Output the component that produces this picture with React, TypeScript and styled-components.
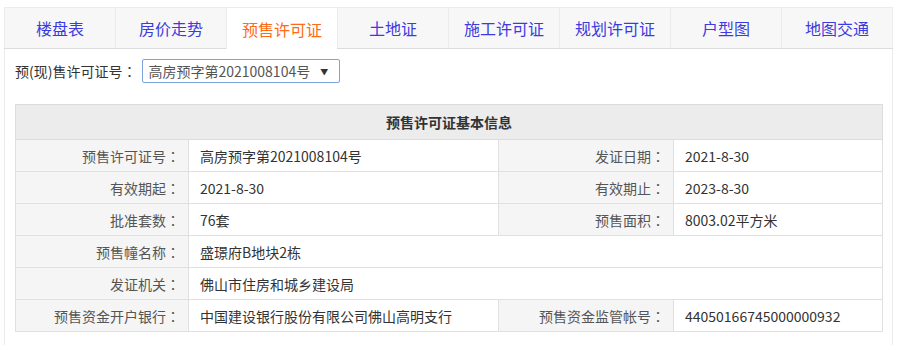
import React from 'react'
import styled, { createGlobalStyle } from 'styled-components'

const FONT = `"Microsoft YaHei", "Noto Sans CJK SC", "Noto Sans", sans-serif`

const GlobalStyle = createGlobalStyle`
  html, body {
    margin: 0;
    padding: 0;
    background: #fff;
    font-family: ${FONT};
  }
`

const TABS = ['楼盘表', '房价走势', '预售许可证', '土地证', '施工许可证', '规划许可证', '户型图', '地图交通']
const ACTIVE_TAB = 2

type Field = { label: string; value: string }
type Row = [Field] | [Field, Field]

const ROWS: Row[] = [
  [
    { label: '预售许可证号', value: '高房预字第2021008104号' },
    { label: '发证日期', value: '2021-8-30' },
  ],
  [
    { label: '有效期起', value: '2021-8-30' },
    { label: '有效期止', value: '2023-8-30' },
  ],
  [
    { label: '批准套数', value: '76套' },
    { label: '预售面积', value: '8003.02平方米' },
  ],
  [{ label: '预售幢名称', value: '盛璟府B地块2栋' }],
  [{ label: '发证机关', value: '佛山市住房和城乡建设局' }],
  [
    { label: '预售资金开户银行', value: '中国建设银行股份有限公司佛山高明支行' },
    { label: '预售资金监管帐号', value: '44050166745000000932' },
  ],
]

const Page = styled.div`
  padding: 7px 7px 0 4px;
`

const Panel = styled.div`
  width: 889px;
  border-left: 1px solid #ebebeb;
  border-right: 1px solid #ebebeb;
  box-sizing: border-box;
  height: 338px;
`

const TabBar = styled.ul`
  display: flex;
  margin: 0 -1px;
  padding: 0;
  list-style: none;
  border-top: 1px solid #ececec;
  border-bottom: 1px solid #dcdcdc;
  background: #f7f7f7;
  height: 40px;
`

const Tab = styled.li<{ $active?: boolean }>`
  flex: 1;
  display: flex;
  align-items: center;
  justify-content: center;
  font-size: 16px;
  color: ${(p) => (p.$active ? '#ff6a13' : '#3b3bdf')};
  background: ${(p) => (p.$active ? '#fff' : 'transparent')};
  border-left: 1px solid #ebebeb;
  margin-bottom: ${(p) => (p.$active ? '-1px' : '0')};
  cursor: pointer;
  &:last-child {
    border-right: 1px solid #ececec;
  }
`

const Body = styled.div`
  padding: 10px 10px 0 10px;
`

const PickerRow = styled.div`
  display: flex;
  align-items: center;
  gap: 6px;
  height: 24px;
  font-size: 14px;
  color: #333;
`

// centred full-width colon, as the original page's font draws it
const Colon = styled.span`
  font-family: "Noto Sans CJK TC", "Noto Sans CJK SC", sans-serif;
`

const Picker = styled.div`
  display: flex;
  align-items: center;
  gap: 10px;
  width: 198px;
  height: 24px;
  box-sizing: border-box;
  padding: 0 0 0 5px;
  border: 1px solid #7ba3dd;
  border-radius: 2px;
  font-size: 14px;
  color: #555;
  background: #fff;
`

const Caret = styled.span`
  font-size: 8px;
  color: #333;
`

const InfoTable = styled.table`
  margin-top: 21px;
  width: 867px;
  border-collapse: collapse;
  table-layout: fixed;
  font-size: 14px;
  border: 1px solid #dcdcdc;
`

const HeadCell = styled.th`
  height: 34px;
  padding: 0;
  background: #ececec;
  color: #333;
  font-weight: bold;
  text-align: center;
  border: 1px solid #dcdcdc;
`

const LabelCell = styled.td`
  height: 31px;
  padding: 0 8px 0 0;
  background: #f5f5f5;
  color: #555;
  text-align: right;
  border: 1px solid #e0e0e0;
  white-space: nowrap;
`

const ValueCell = styled.td`
  height: 31px;
  padding: 0 0 0 11px;
  background: #fff;
  color: #333;
  text-align: left;
  border: 1px solid #e0e0e0;
  white-space: nowrap;
`

export default function App() {
  return (
    <Page>
      <GlobalStyle />
      <Panel>
        <TabBar>
          {TABS.map((t, i) => (
            <Tab key={t} $active={i === ACTIVE_TAB}>
              {t}
            </Tab>
          ))}
        </TabBar>
        <Body>
          <PickerRow>
            <span>
              预(现)售许可证号<Colon>：</Colon>
            </span>
            <Picker>
              <span>高房预字第2021008104号</span>
              <Caret>▼</Caret>
            </Picker>
          </PickerRow>
          <InfoTable>
            <colgroup>
              <col style={{ width: 173 }} />
              <col style={{ width: 310 }} />
              <col style={{ width: 175 }} />
              <col style={{ width: 209 }} />
            </colgroup>
            <thead>
              <tr>
                <HeadCell colSpan={4}>预售许可证基本信息</HeadCell>
              </tr>
            </thead>
            <tbody>
              {ROWS.map((row, i) => (
                <tr key={i}>
                  <LabelCell>
                    {row[0].label}
                    <Colon>：</Colon>
                  </LabelCell>
                  <ValueCell colSpan={row[1] ? 1 : 3}>{row[0].value}</ValueCell>
                  {row[1] && (
                    <>
                      <LabelCell>
                        {row[1].label}
                        <Colon>：</Colon>
                      </LabelCell>
                      <ValueCell>{row[1].value}</ValueCell>
                    </>
                  )}
                </tr>
              ))}
            </tbody>
          </InfoTable>
        </Body>
      </Panel>
    </Page>
  )
}
